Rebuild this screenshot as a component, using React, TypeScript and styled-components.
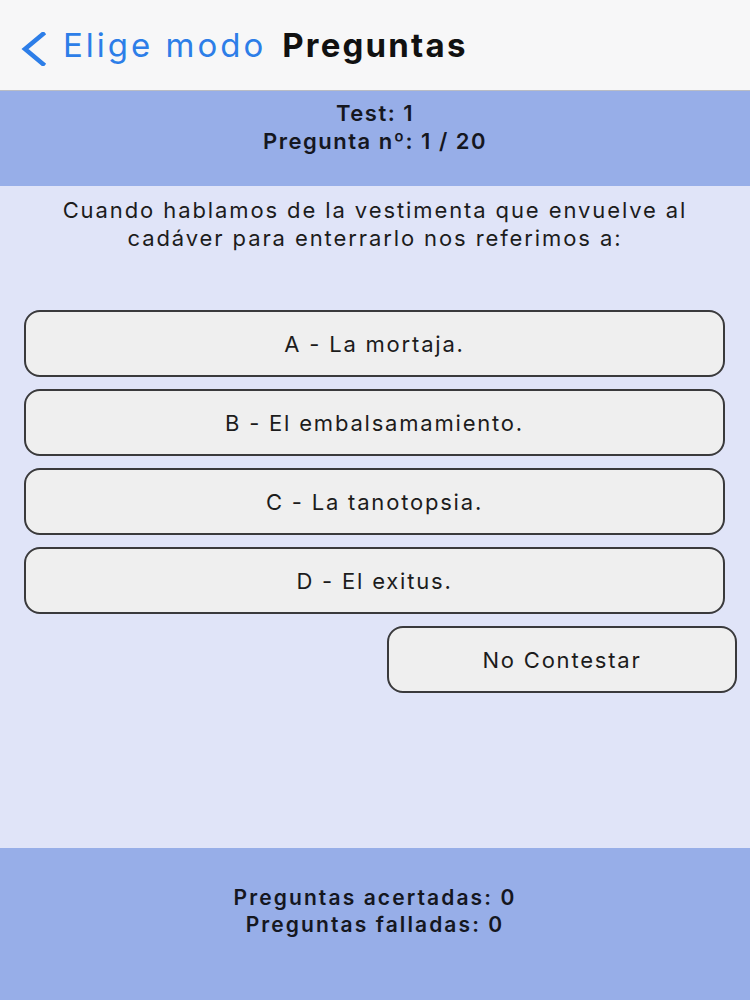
import styled, { createGlobalStyle } from "styled-components";

const answers = [
  "A - La mortaja.",
  "B - El embalsamamiento.",
  "C - La tanotopsia.",
  "D - El exitus.",
];

const GlobalStyle = createGlobalStyle`
  html, body {
    margin: 0;
    padding: 0;
    background: #e0e4f8;
  }
  body {
    font-family: Inter, "Liberation Sans", Arial, sans-serif;
    color: #1a1a1a;
  }
`;

const App = () => {
  return (
    <>
      <GlobalStyle />
      <Screen>
        <NavBar>
          <BackButton>
            <Chevron width="28" height="34" viewBox="0 0 28 34" fill="none">
              <path
                d="M24 2 L6 17 L24 32"
                stroke="#2d7ee8"
                strokeWidth="4.5"
                strokeLinecap="square"
                strokeLinejoin="miter"
              />
            </Chevron>
            <BackLabel>Elige modo</BackLabel>
          </BackButton>
          <NavTitle>Preguntas</NavTitle>
        </NavBar>

        <InfoBand $top>
          <InfoLine>Test: 1</InfoLine>
          <InfoLine>Pregunta nº: 1 / 20</InfoLine>
        </InfoBand>

        <Body>
          <Question>
            Cuando hablamos de la vestimenta que envuelve al
            <br />
            cadáver para enterrarlo nos referimos a:
          </Question>
          <AnswerList>
            {answers.map((a) => (
              <AnswerButton key={a}>{a}</AnswerButton>
            ))}
            <SkipButton>No Contestar</SkipButton>
          </AnswerList>
        </Body>

        <InfoBand>
          <InfoLine $small>Preguntas acertadas: 0</InfoLine>
          <InfoLine $small>Preguntas falladas: 0</InfoLine>
        </InfoBand>
      </Screen>
    </>
  );
};

export default App;

const Screen = styled.div`
  width: 750px;
  height: 1000px;
  display: flex;
  flex-direction: column;
  background: #e0e4f8;
  overflow: hidden;
`;

const NavBar = styled.div`
  height: 91px;
  flex-shrink: 0;
  display: flex;
  align-items: center;
  padding: 0 0 0 19px;
  background: #f7f7f8;
  border-bottom: 1px solid #b9bcc4;
  box-sizing: border-box;
  gap: 16px;
`;

const BackButton = styled.div`
  display: flex;
  align-items: center;
  gap: 16px;
`;

const Chevron = styled.svg`
  margin-top: 8px;
`;

const BackLabel = styled.span`
  font-size: 33px;
  letter-spacing: 3px;
  color: #2d7ee8;
`;

const NavTitle = styled.span`
  font-size: 33px;
  font-weight: 700;
  letter-spacing: 2.2px;
  color: #111;
`;

const InfoBand = styled.div<{ $top?: boolean }>`
  flex: ${(p) => (p.$top ? "0 0 95px" : "1")};
  box-sizing: border-box;
  padding-top: ${(p) => (p.$top ? "8px" : "36px")};
  background: #97aee8;
  display: flex;
  flex-direction: column;
  align-items: center;
`;

const InfoLine = styled.div<{ $small?: boolean }>`
  font-size: ${(p) => (p.$small ? "21px" : "22px")};
  line-height: ${(p) => (p.$small ? "27px" : "28px")};
  font-weight: 600;
  letter-spacing: ${(p) => (p.$small ? "2.1px" : "1.5px")};
  color: #15171f;
`;

const Body = styled.div`
  flex: 0 0 662px;
  box-sizing: border-box;
  padding-top: 10px;
  display: flex;
  flex-direction: column;
`;

const Question = styled.div`
  text-align: center;
  font-size: 22px;
  line-height: 28px;
  letter-spacing: 1.9px;
  color: #1c1c1c;
`;

const AnswerList = styled.div`
  margin-top: 58px;
  display: flex;
  flex-direction: column;
  gap: 12px;
  padding: 0 13px 0 24px;
`;

const AnswerButton = styled.button`
  height: 67px;
  margin-right: 12px;
  box-sizing: border-box;
  border: 2px solid #3a3a3c;
  border-radius: 16px;
  background: #efefef;
  font-family: Inter, "Liberation Sans", Arial, sans-serif;
  font-size: 22px;
  letter-spacing: 1.8px;
  color: #1c1c1c;
  padding: 0;
  cursor: pointer;
`;

const SkipButton = styled(AnswerButton)`
  align-self: flex-end;
  width: 350px;
  margin-right: 0;
`;
